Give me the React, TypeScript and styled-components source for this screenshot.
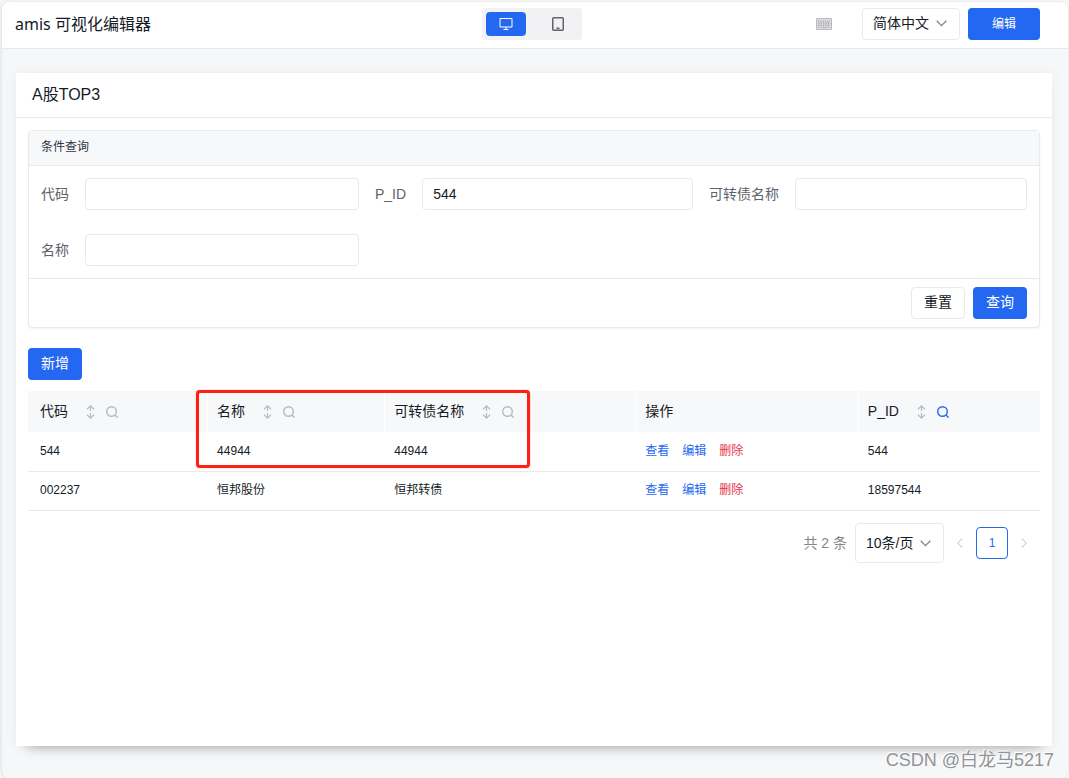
import React from 'react';
import styled, { createGlobalStyle, css } from 'styled-components';

const blue = '#2468f2';
const ink = '#151b26';
const line = '#e8e9eb';

const GlobalStyle = createGlobalStyle`
  *, *::before, *::after { box-sizing: border-box; }
  body {
    margin: 0;
    background: #f6f6f6;
    color: ${ink};
    font: 14px/20px "Liberation Sans", "Noto Sans CJK SC", sans-serif;
  }
  button, input, select { font: inherit; color: inherit; margin: 0; }
  svg { display: block; flex: none; }
`;

const Page = styled.div`
  position: relative;
  padding: 2px 1px 0 1px;
`;

const Frame = styled.div`
  display: flex;
  flex-direction: column;
  min-height: calc(100vh - 2px);
  border-left: 1px solid ${line};
  border-radius: 8px;
  background: #f6f7f9;
  box-shadow: 0 0 2px rgba(0, 0, 0, 0.12);
  overflow: hidden;
`;

const TopBar = styled.header`
  display: grid;
  grid-template-columns: 1fr auto 1fr;
  align-items: center;
  height: 47px;
  padding: 0 19px 3px 13px;
  border-bottom: 1px solid ${line};
  background: #fff;
`;

const AppTitle = styled.div`
  font: 16px/24px "Noto Sans", "Noto Sans CJK SC", sans-serif;
`;

const ViewSwitch = styled.div`
  display: flex;
  gap: 12px;
  padding: 4px;
  border-radius: 4px;
  background: #f2f2f4;
`;

const ViewButton = styled.button<{ $active?: boolean }>`
  display: flex;
  align-items: center;
  justify-content: center;
  width: 40px;
  height: 24px;
  padding: 0;
  border: 0;
  border-radius: 4px;
  background: ${p => (p.$active ? blue : 'transparent')};
  color: ${p => (p.$active ? '#fff' : '#5e626a')};
`;

const Actions = styled.div`
  display: flex;
  align-items: center;
  justify-content: flex-end;
  gap: 8px;
  margin-right: 9px;
`;

const IconButton = styled.button`
  display: flex;
  margin-right: 22px;
  padding: 0;
  border: 0;
  background: none;
  color: #b8babf;
`;

const SelectBox = styled.span<{ $width: number; $height: number }>`
  display: flex;
  align-items: center;
  position: relative;
  width: ${p => p.$width}px;
  height: ${p => p.$height}px;

  select {
    width: 100%;
    height: 100%;
    padding: 0 28px 1px 10px;
    border: 1px solid ${line};
    border-radius: 4px;
    background: #fff;
    appearance: none;
  }

  svg {
    position: absolute;
    right: 13px;
    pointer-events: none;
    color: #84868c;
  }
`;

const Button = styled.button<{ $primary?: boolean; $wide?: boolean }>`
  height: 32px;
  min-width: ${p => (p.$wide ? 72 : 54)}px;
  padding: 0 12px 2px;
  border: 1px solid ${line};
  border-radius: 4px;
  background: #fff;
  ${p => p.$wide && css`
    padding-bottom: 0;
    font-size: 12px;
  `}
  ${p => p.$primary && css`
    border: 0;
    background: ${blue};
    color: #fff;
  `}
`;

const Main = styled.main`
  flex: 1;
  display: flex;
  flex-direction: column;
  padding: 24px 16px 32px 14px;
`;

const Card = styled.section`
  flex: 1;
  background: #fff;
  box-shadow: 0 0 12px rgba(0, 0, 0, 0.05), 0 12px 12px -12px rgba(0, 0, 0, 0.36);
`;

const CardTitle = styled.h1`
  margin: 0;
  padding: 10px 16px;
  border-bottom: 1px solid ${line};
  font-size: 16px;
  font-weight: 400;
  line-height: 24px;
`;

const CardBody = styled.div`
  padding: 12px;
`;

const Panel = styled.form`
  border: 1px solid ${line};
  border-radius: 4px;
  background: #fff;
  box-shadow: 0 1px 2px rgba(0, 0, 0, 0.05);
`;

const PanelTitle = styled.h2`
  margin: 0;
  padding: 6px 12px 8px;
  border-bottom: 1px solid ${line};
  background: #f7f8fa;
  color: #303540;
  font-size: 12px;
  font-weight: 400;
`;

const Fields = styled.div`
  display: grid;
  grid-template-columns: repeat(3, 1fr);
  gap: 24px 16px;
  padding: 12px;
`;

const Field = styled.label`
  display: flex;
  align-items: center;
  gap: 16px;
  min-width: 0;
  color: #5e626a;
  white-space: nowrap;
`;

const TextInput = styled.input`
  flex: 1;
  min-width: 0;
  height: 32px;
  padding: 0 10px;
  border: 1px solid ${line};
  border-radius: 4px;
  background: #fff;
  color: ${ink};
`;

const PanelFooter = styled.div`
  display: flex;
  justify-content: flex-end;
  gap: 8px;
  padding: 8px 12px;
  border-top: 1px solid ${line};
`;

const Toolbar = styled.div`
  display: flex;
  padding: 20px 0 11px;
`;

const TableArea = styled.div`
  position: relative;
`;

const Table = styled.table`
  width: 100%;
  border-collapse: separate;
  border-spacing: 0;
  table-layout: fixed;
  text-align: left;

  th {
    height: 41px;
    padding: 0 9px 1px;
    border-left: 1px solid #fff;
    background: #f7f8fa;
    font-weight: 400;
  }
  td {
    height: 39px;
    padding: 0 10px 2px;
    border-bottom: 1px solid ${line};
    font-size: 12px;
  }
  tbody tr:first-child td { height: 40px; }
  th:first-child, td:first-child { border-left: 0; padding-left: 12px; }
`;

const HeadCell = styled.div`
  display: flex;
  align-items: center;
`;

const ToolButton = styled.button<{ $gap: number; $on?: boolean }>`
  display: flex;
  margin-left: ${p => p.$gap}px;
  padding: 2px 0 0;
  border: 0;
  background: none;
  color: ${p => (p.$on ? blue : '#b8babf')};
`;

const RowLink = styled.a<{ $danger?: boolean }>`
  margin-right: 13px;
  color: ${p => (p.$danger ? '#e8314a' : blue)};
  text-decoration: none;
`;

const Highlight = styled.div`
  position: absolute;
  top: -1px;
  left: 16.6%;
  width: 33%;
  height: 78px;
  border: 3px solid #ff2015;
  border-radius: 4px;
  box-shadow: 0 0 1px #ff2015;
  pointer-events: none;
`;

const Pager = styled.nav`
  display: flex;
  align-items: center;
  justify-content: flex-end;
  margin-top: 12px;
`;

const Total = styled.span`
  margin-right: 8px;
  padding-bottom: 1px;
  color: #84868c;
`;

const PageButton = styled.button<{ $current?: boolean }>`
  display: flex;
  align-items: center;
  justify-content: center;
  width: 32px;
  height: 32px;
  padding: 0;
  border: ${p => (p.$current ? `1px solid ${blue}` : '0')};
  border-radius: 4px;
  background: none;
  color: ${p => (p.$current ? blue : '#d4d5d8')};
  font-size: 12px;
`;

const Watermark = styled.div`
  position: absolute;
  right: 15px;
  bottom: 6px;
  color: #929396;
  font-size: 18px;
  line-height: 24px;
  text-shadow: -1px -1px 0 #fff;
`;

const stroke = { fill: 'none', stroke: 'currentColor' } as const;

const Monitor = () => (
  <svg width="14" height="14" viewBox="0 0 14 14" {...stroke}>
    <path d="M1 1.5h12v8.5H1zM7 10v2.5M4.500 12.500h5" />
  </svg>
);

const Tablet = () => (
  <svg width="12" height="14" viewBox="0 0 12 14" {...stroke} strokeWidth="1.5">
    <rect x="0.75" y="0.75" width="10.5" height="12.5" rx="1" />
    <path d="M4.500 11.250h3" />
  </svg>
);

const Keyboard = () => (
  <svg width="16" height="12" viewBox="0 0 16 12" {...stroke}>
    <rect x="0.5" y="0.5" width="15" height="11" rx="0.5" fill="#dcdde0" />
    <path d="M2 3.500h12M2.500 5.500h12M2 7.500h12" stroke="#a9abb0" strokeDasharray="1.300 1" strokeWidth="1.300" />
    <path d="M2 9.500h1.500M4.500 9.500h7M12.500 9.500h1.500" />
  </svg>
);

const ChevronDown = () => (
  <svg width="11" height="7" viewBox="0 0 11 7" {...stroke} strokeWidth="1.3">
    <path d="M0.700 0.800l4.800 4.800 4.800-4.800" />
  </svg>
);

const Chevron = ({ next }: { next?: boolean }) => (
  <svg width="6" height="10" viewBox="0 0 6 10" {...stroke} strokeWidth="1.2">
    <path d={next ? 'M0.700 0.500L5.200 5 0.700 9.500' : 'M5.300 0.500L0.800 5l4.500 4.500'} />
  </svg>
);

const SortIcon = () => (
  <svg width="9" height="14" viewBox="0 0 9 14" {...stroke} strokeWidth="1.2">
    <path d="M4.500 1v5M1 4.300L4.500 0.900 8 4.300M4.500 8v5M1 9.700l3.500 3.400L8 9.700" />
  </svg>
);

const SearchIcon = () => (
  <svg width="12" height="12" viewBox="0 0 12 12" {...stroke} strokeWidth="1.4">
    <circle cx="5.500" cy="5.500" r="4.800" />
    <path d="M9 9l2.600 2.600" />
  </svg>
);

const fields = [
  { label: '代码', name: 'code', value: '' },
  { label: 'P_ID', name: 'pid', value: '544' },
  { label: '可转债名称', name: 'bond', value: '' },
  { label: '名称', name: 'name', value: '' },
];

const columns = [
  { title: '代码', width: '17.7%', tools: true },
  { title: '名称', width: '17.5%', tools: true },
  { title: '可转债名称', width: '24.8%', tools: true },
  { title: '操作', width: '22%', tools: false },
  { title: 'P_ID', width: '18%', tools: true, filtered: true },
];

const rows = [
  { code: '544', name: '44944', bond: '44944', pid: '544' },
  { code: '002237', name: '恒邦股份', bond: '恒邦转债', pid: '18597544' },
];

export default function App() {
  return (
    <Page>
      <GlobalStyle />
      <Frame>
        <TopBar>
          <AppTitle>amis 可视化编辑器</AppTitle>
          <ViewSwitch>
            <ViewButton type="button" $active aria-label="桌面"><Monitor /></ViewButton>
            <ViewButton type="button" aria-label="移动端"><Tablet /></ViewButton>
          </ViewSwitch>
          <Actions>
            <IconButton type="button" aria-label="快捷键"><Keyboard /></IconButton>
            <SelectBox $width={98} $height={32}>
              <select aria-label="语言"><option>简体中文</option></select>
              <ChevronDown />
            </SelectBox>
            <Button type="button" $primary $wide>编辑</Button>
          </Actions>
        </TopBar>
        <Main>
          <Card>
            <CardTitle>A股TOP3</CardTitle>
            <CardBody>
              <Panel onSubmit={e => e.preventDefault()}>
                <PanelTitle>条件查询</PanelTitle>
                <Fields>
                  {fields.map(f => (
                    <Field key={f.name}>
                      {f.label}
                      <TextInput type="text" name={f.name} defaultValue={f.value} />
                    </Field>
                  ))}
                </Fields>
                <PanelFooter>
                  <Button type="reset">重置</Button>
                  <Button type="submit" $primary>查询</Button>
                </PanelFooter>
              </Panel>
              <Toolbar>
                <Button type="button" $primary>新增</Button>
              </Toolbar>
              <TableArea>
                <Table>
                  <colgroup>
                    {columns.map(c => <col key={c.title} style={{ width: c.width }} />)}
                  </colgroup>
                  <thead>
                    <tr>
                      {columns.map(c => (
                        <th key={c.title} scope="col">
                          <HeadCell>
                            {c.title}
                            {c.tools && (
                              <>
                                <ToolButton type="button" $gap={18} aria-label="排序"><SortIcon /></ToolButton>
                                <ToolButton type="button" $gap={11} $on={c.filtered} aria-label="搜索"><SearchIcon /></ToolButton>
                              </>
                            )}
                          </HeadCell>
                        </th>
                      ))}
                    </tr>
                  </thead>
                  <tbody>
                    {rows.map(r => (
                      <tr key={r.code}>
                        <td>{r.code}</td>
                        <td>{r.name}</td>
                        <td>{r.bond}</td>
                        <td>
                          <RowLink href="#view">查看</RowLink>
                          <RowLink href="#edit">编辑</RowLink>
                          <RowLink href="#delete" $danger>删除</RowLink>
                        </td>
                        <td>{r.pid}</td>
                      </tr>
                    ))}
                  </tbody>
                </Table>
                <Highlight />
              </TableArea>
              <Pager aria-label="分页">
                <Total>共 2 条</Total>
                <SelectBox $width={89} $height={40}>
                  <select aria-label="每页条数"><option>10条/页</option></select>
                  <ChevronDown />
                </SelectBox>
                <PageButton type="button" aria-label="上一页"><Chevron /></PageButton>
                <PageButton type="button" $current>1</PageButton>
                <PageButton type="button" aria-label="下一页"><Chevron next /></PageButton>
              </Pager>
            </CardBody>
          </Card>
        </Main>
      </Frame>
      <Watermark>CSDN @白龙马5217</Watermark>
    </Page>
  );
}
